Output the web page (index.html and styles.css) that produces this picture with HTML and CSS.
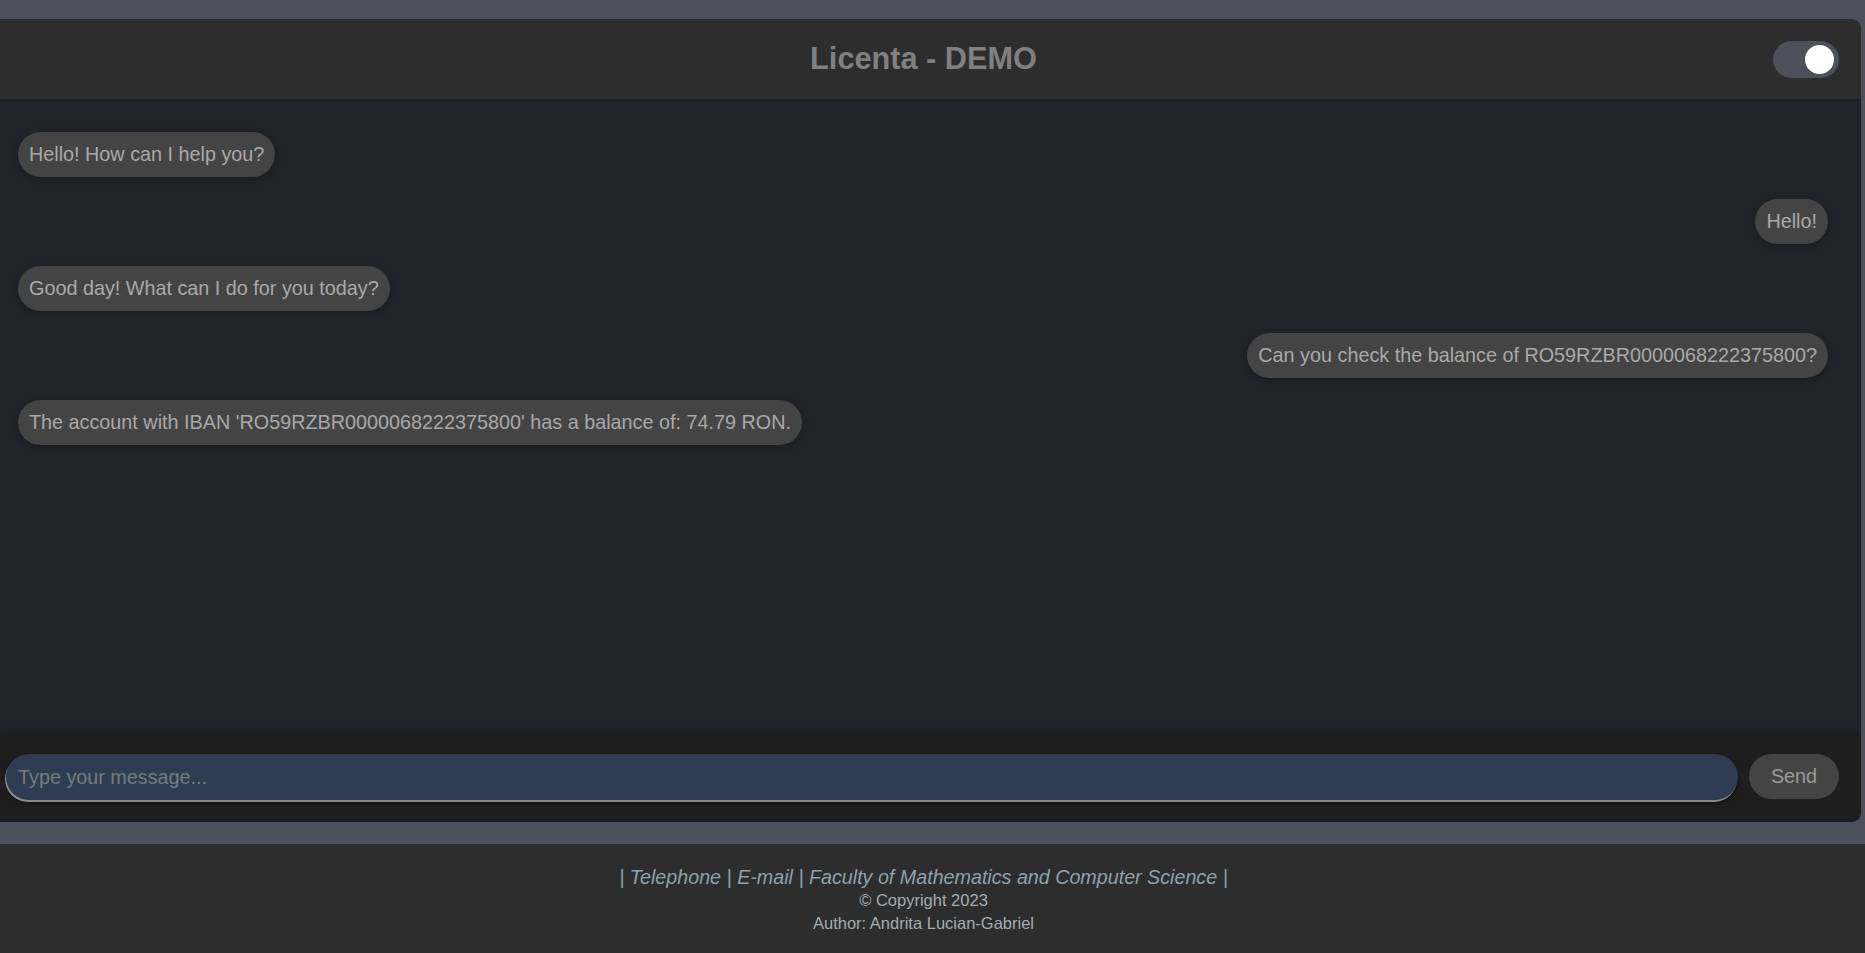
FILE: index.html
```html
<!DOCTYPE html>
<html lang="en">
<head>
<meta charset="utf-8">
<title>Licenta - DEMO</title>
<link rel="stylesheet" href="styles.css">
</head>
<body>
<div class="app">
  <header class="topbar">
    <h1 class="title">Licenta - DEMO</h1>
    <div class="toggle"><span class="knob"></span></div>
  </header>
  <main class="chat">
    <div class="msg bot">Hello! How can I help you?</div>
    <div class="msg user">Hello!</div>
    <div class="msg bot">Good day! What can I do for you today?</div>
    <div class="msg user">Can you check the balance of RO59RZBR0000068222375800?</div>
    <div class="msg bot">The account with IBAN 'RO59RZBR0000068222375800' has a balance of: 74.79 RON.</div>
  </main>
  <div class="composer">
    <input class="input" type="text" placeholder="Type your message...">
    <button class="send">Send</button>
  </div>
</div>
<footer class="footer">
  <div class="links">| <span>Telephone</span> | <span>E-mail</span> | <span>Faculty of Mathematics and Computer Science</span> |</div>
  <div class="small">© Copyright 2023</div>
  <div class="small">Author: Andrita Lucian-Gabriel</div>
</footer>
</body>
</html>
```
FILE: styles.css
```css
* { box-sizing: border-box; }
html, body { margin: 0; padding: 0; }
body {
  background: #4b505a;
  font-family: "Liberation Sans", Arial, sans-serif;
  overflow: hidden;
}
.app {
  margin-top: 19px;
  width: 1861px;
  border-radius: 0 9px 9px 0;
  overflow: hidden;
  display: flex;
  flex-direction: column;
}
.topbar {
  height: 80px;
  background: #2d2d2d;
  display: flex;
  align-items: center;
  padding-right: 22px;
}
.title {
  flex: 1;
  margin: 0 -74px 0 0;
  text-align: center;
  font-size: 30.7px;
  font-weight: bold;
  color: #808080;
  line-height: 36px;
}
.toggle {
  width: 66px;
  height: 37px;
  border-radius: 19px;
  background: #4b505a;
  display: flex;
  align-items: center;
  justify-content: flex-end;
  padding-right: 5px;
  position: relative;
  z-index: 1;
}
.knob {
  width: 29px;
  height: 29px;
  border-radius: 50%;
  background: #ffffff;
}
.chat {
  height: 633px;
  background: #202428;
  padding: 33px 33px 0 18px;
  display: flex;
  flex-direction: column;
  gap: 22px;
}
.msg {
  height: 45px;
  padding: 11px;
  border-radius: 23px;
  background: #444444;
  color: #a9a9a9;
  font-size: 19.8px;
  line-height: 23px;
  white-space: nowrap;
  box-shadow: 0 2px 6px rgba(0,0,0,0.25);
}
.bot { align-self: flex-start; }
.user { align-self: flex-end; }
.composer {
  height: 90px;
  background: #1e1e1e;
  padding: 22px 22px 0 6px;
  display: flex;
  align-items: flex-start;
  gap: 11px;
  box-shadow: 0 -2px 4px rgba(0,0,0,0.15);
}
.input {
  flex: 1;
  height: 46px;
  border: none;
  outline: none;
  border-radius: 23px;
  background: #2e3d52;
  color: #aaaaaa;
  font-family: "Liberation Sans", Arial, sans-serif;
  font-size: 19.8px;
  padding: 0 12px;
  box-shadow: -1px 2px 0 #8a8a8a, 0 3px 3px rgba(0,0,0,0.5);
}
.input::placeholder { color: #777b80; }
.send {
  width: 90px;
  height: 45px;
  border: none;
  border-radius: 23px;
  background: #444444;
  color: #9a9a9a;
  font-family: "Liberation Sans", Arial, sans-serif;
  font-size: 19.8px;
  padding: 0;
}
.footer {
  margin-top: 22px;
  height: 109px;
  background: #2d2d2d;
  padding: 21px 18px 0 0;
  text-align: center;
  line-height: 24px;
}
.links {
  font-size: 19.7px;
  font-style: italic;
  color: #8ba2ad;
}
.small {
  font-size: 16.5px;
  line-height: 23px;
  color: #a3acb2;
}
```
